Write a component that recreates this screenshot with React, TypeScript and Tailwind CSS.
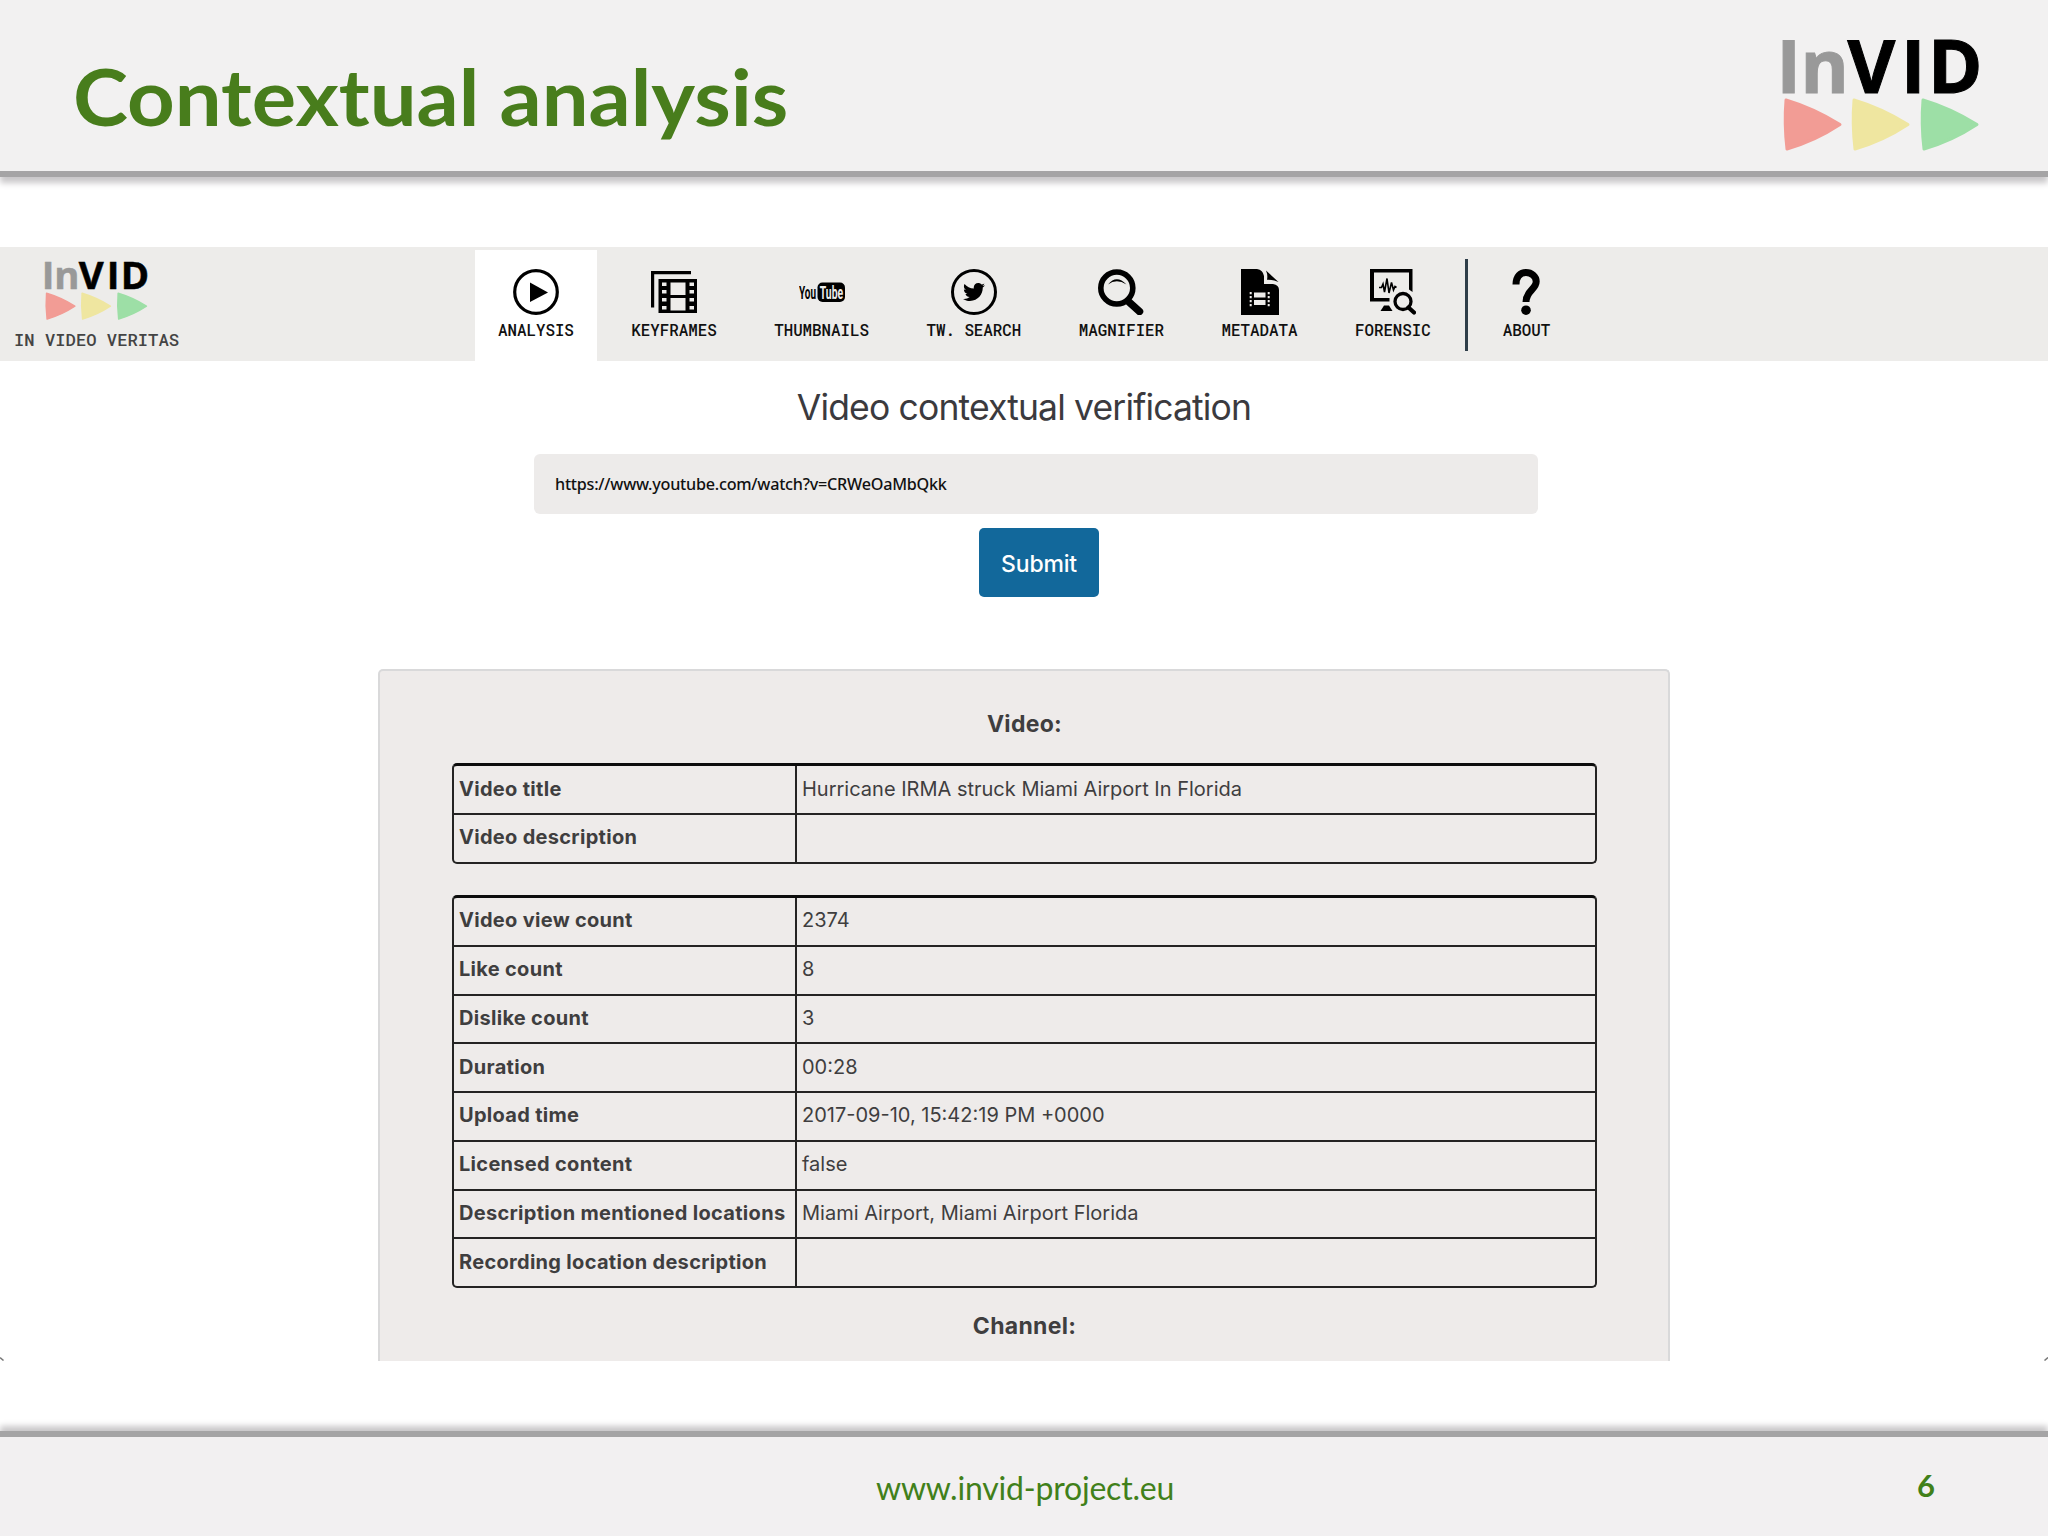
import type { ReactNode } from "react";
import { FaTwitter } from "react-icons/fa";

type Row = { label: string; value: string };

const videoInfo: Row[] = [
  { label: "Video title", value: "Hurricane IRMA struck Miami Airport In Florida" },
  { label: "Video description", value: "" },
];

const videoStats: Row[] = [
  { label: "Video view count", value: "2374" },
  { label: "Like count", value: "8" },
  { label: "Dislike count", value: "3" },
  { label: "Duration", value: "00:28" },
  { label: "Upload time", value: "2017-09-10, 15:42:19 PM +0000" },
  { label: "Licensed content", value: "false" },
  { label: "Description mentioned locations", value: "Miami Airport, Miami Airport Florida" },
  { label: "Recording location description", value: "" },
];

function Logo({ className }: { className?: string }) {
  return (
    <svg viewBox="0 0 197 111" overflow="visible" className={className} aria-label="InVID">
      <g fontFamily="'Open Sans', sans-serif" fontWeight="700" fontSize="73.5">
        <text fill="#999999" stroke="#999999" strokeWidth="1">
          <tspan x="-6.5" y="52.5">I</tspan>
          <tspan x="17.5" y="52.5">n</tspan>
        </text>
        <text fill="#000000" stroke="#000000" strokeWidth="1">
          <tspan x="64.5" y="52.5">V</tspan>
          <tspan x="118" y="52.5">I</tspan>
          <tspan x="145" y="52.5">D</tspan>
        </text>
      </g>
      <g strokeWidth="3" strokeLinejoin="round">
        <path d="M3 60 Q30 68 57 84.500 Q32 101 4 109 Q1 84 3 60Z" fill="#f29c95" stroke="#f29c95" />
        <path d="M71 60 Q98 68 125 84.500 Q100 101 72 109 Q69 84 71 60Z" fill="#efe6a0" stroke="#efe6a0" />
        <path d="M140 60 Q167 68 194 84.500 Q169 101 141 109 Q138 84 140 60Z" fill="#9ddfa6" stroke="#9ddfa6" />
      </g>
    </svg>
  );
}

function PlayIcon() {
  return (
    <svg viewBox="0 0 46 46" className="size-[46px]">
      <circle cx="23" cy="23" r="21.300" fill="none" stroke="#000" strokeWidth="3.2" />
      <path d="M17 13.500 35 23.500 17 33Z" />
    </svg>
  );
}

function KeyframesIcon() {
  return (
    <svg viewBox="0 0 46 46" className="size-[46px]">
      <path d="M0 2h40v3.200H3.200V38.500H0Z" />
      <path
        fillRule="evenodd"
        d="M7.500 10H46V44H7.500ZM19.500 13.500V26H34.500V13.500ZM19.500 29V41.500H34.500V29ZM11 13.500V17H15.500V13.500ZM11 21V24.500H15.500V21ZM11 29V32.500H15.500V29ZM11 37V40.500H15.500V37ZM38.500 13.500V17H43V13.500ZM38.500 21V24.500H43V21ZM38.500 29V32.500H43V29ZM38.500 37V40.500H43V37Z"
      />
    </svg>
  );
}

function YouTubeIcon() {
  return (
    <svg viewBox="0 0 46 46" className="size-[46px]">
      <rect x="18.500" y="13.500" width="27.500" height="19.500" rx="5" />
      <g fontFamily="Roboto, sans-serif" fontWeight="700" fontSize="18.500">
        <text transform="translate(0 29.800) scale(0.54 1)">You</text>
        <text transform="translate(20.800 29.800) scale(0.56 1)" fill="#edecea">Tube</text>
      </g>
    </svg>
  );
}

function TwitterIcon() {
  return (
    <div className="flex size-[46px] items-center justify-center rounded-full border-[3px] border-black">
      <FaTwitter className="size-[22px]" />
    </div>
  );
}

function MagnifierIcon() {
  return (
    <svg viewBox="0 0 46 46" className="size-[46px]">
      <circle cx="18.800" cy="19" r="16" fill="none" stroke="#000" strokeWidth="5.600" />
      <path d="M31 33 41.500 42.500" stroke="#000" strokeWidth="7.500" strokeLinecap="round" />
      <path d="M10 15.500Q18.500 5 28.500 15.500Q18.500 9 10 15.500Z" />
    </svg>
  );
}

function MetadataIcon() {
  return (
    <svg viewBox="0 0 46 46" className="size-[46px]">
      <path d="M4 0H20Q26 1 27 7V15H36Q42 16 42 21V46H4Z" />
      <path d="M29 1.500 41.500 13Q36 10.500 30 10.800Q31 6 29 1.500Z" />
      <g fill="#edecea">
        <path d="M17 23.500H28.500V28.500H17ZM17 31H28.500V36H17Z" />
        <path d="M12.700 23h2v2.200h-2zM12.700 27h2v2.200h-2zM12.700 31h2v2.200h-2zM12.700 35h2v2.200h-2zM30.700 23h2v2.200h-2zM30.700 27h2v2.200h-2zM30.700 31h2v2.200h-2zM30.700 35h2v2.200h-2z" />
      </g>
    </svg>
  );
}

function ForensicIcon() {
  return (
    <svg viewBox="0 0 46 46" className="size-[46px]">
      <path d="M0 0H42.500V23L39 20.500V3.500H4V29H19.500V32.500H0Z" />
      <path d="M14 36.500H19L22.500 42H10.500Z" />
      <path
        d="M9 18.500H11.500L13 15 14.500 23 17 9.500 19 24 21.500 13.500 23.500 21 25 17.500 26.500 18.500"
        fill="none"
        stroke="#000"
        strokeWidth="1.600"
      />
      <circle cx="33" cy="32.500" r="8" fill="none" stroke="#000" strokeWidth="3.300" />
      <path d="M38.500 38.500 44 43.500" stroke="#000" strokeWidth="4.200" strokeLinecap="round" />
    </svg>
  );
}

function AboutIcon() {
  return (
    <svg viewBox="0 0 46 46" className="size-[46px]">
      <path
        d="M13 15.500C13 7 17.500 3.500 23 3.500S33.200 7.500 33.200 12.500C33.200 20.500 23 21.500 23 33"
        fill="none"
        stroke="#000"
        strokeWidth="7"
      />
      <circle cx="23" cy="41.200" r="4.800" />
    </svg>
  );
}

function NavItem({ label, active, children }: { label: string; active?: boolean; children: ReactNode }) {
  return (
    <a
      className={
        active
          ? "flex h-[111px] flex-col items-center bg-white px-[23px] pt-[19px]"
          : "flex h-[111px] flex-col items-center px-[23px] pt-[19px]"
      }
    >
      {children}
      <span className="mt-[4px] font-['Roboto_Mono',monospace] text-[15.8px] leading-[22px] font-medium whitespace-pre text-[#111]">
        {label}
      </span>
    </a>
  );
}

function InfoTable({ rows }: { rows: Row[] }) {
  return (
    <div className="overflow-hidden rounded-[5px] border-2 border-t-[3px] border-[#242323] border-t-[#0c0c0c]">
      {rows.map((row, i) => (
        <div key={row.label} className={i === 0 ? "flex h-[47px]" : "flex h-[48.75px] border-t-2 border-[#242323]"}>
          <div className="flex w-[343px] shrink-0 items-center border-r-2 border-[#242323] pb-[2px] pl-[5px] font-bold tracking-[0.3px] whitespace-nowrap">
            {row.label}
          </div>
          <div className="flex items-center pb-[2px] pl-[5px]">{row.value}</div>
        </div>
      ))}
    </div>
  );
}

export default function App() {
  return (
    <div className="flex h-[1536px] w-[2048px] flex-col overflow-hidden bg-white">
      <header className="flex h-[177px] shrink-0 justify-between border-b-[6px] border-[#a5a4a5] bg-[#f2f1f1] shadow-[0_6px_6px_#c9c7c9]">
        <h1 className="mt-[46px] ml-[73px] origin-left scale-x-[1.065] font-[Lato,sans-serif] text-[78px] leading-[100px] font-bold whitespace-nowrap text-[#487d1c]">
          Contextual analysis
        </h1>
        <Logo className="mt-[40px] mr-[68px] h-[111px] w-[197px]" />
      </header>

      <main className="relative flex h-[1184px] shrink-0 flex-col pt-[70px] font-[Inter,sans-serif]">
        <nav className="flex h-[114px] shrink-0 bg-[#edecea]">
          <div className="w-[475px] pt-[15px] pl-[14px]">
            <Logo className="ml-[31px] h-[58px] w-[103px]" />
            <p className="mt-[8px] font-['Roboto_Mono',monospace] text-[17.2px] leading-[24px] font-medium text-[#444]">
              IN VIDEO VERITAS
            </p>
          </div>
          <div className="flex gap-[11.5px] pt-[3px]">
            <NavItem label="ANALYSIS" active><PlayIcon /></NavItem>
            <NavItem label="KEYFRAMES"><KeyframesIcon /></NavItem>
            <NavItem label="THUMBNAILS"><YouTubeIcon /></NavItem>
            <NavItem label="TW. SEARCH"><TwitterIcon /></NavItem>
            <NavItem label="MAGNIFIER"><MagnifierIcon /></NavItem>
            <NavItem label="METADATA"><MetadataIcon /></NavItem>
            <NavItem label="FORENSIC"><ForensicIcon /></NavItem>
            <div className="mt-[9px] h-[92px] w-[3px] bg-[#2f3e49]" />
            <NavItem label="ABOUT"><AboutIcon /></NavItem>
          </div>
        </nav>

        <h2 className="mt-[23px] text-center text-[35.5px] leading-[48px] tracking-[-0.85px] text-[#3b3a3e]">
          Video contextual verification
        </h2>
        <div className="mt-[22px] ml-[534px] flex h-[60px] w-[1004px] items-center rounded-md bg-[#edebea] pl-[21px] font-['Noto_Sans',sans-serif] text-[16.2px] font-medium tracking-[-0.25px] text-[#111]">
          https://www.youtube.com/watch?v=CRWeOaMbQkk
        </div>
        <button className="mt-[14px] ml-[979px] h-[69px] w-[120px] rounded-[5px] bg-[#12689b] pt-[3px] text-[23px] font-medium tracking-[-0.2px] text-white">
          Submit
        </button>

        <section className="mt-[72px] ml-[378px] h-[692px] w-[1292px] shrink-0 rounded-t-[5px] border-2 border-b-0 border-[#d9d9da] bg-[#eeebea] pr-[71px] pl-[72px] text-[20px] text-[#3f3e3f]">
          <h3 className="pt-[37px] text-center text-[23px] leading-[32px] font-bold tracking-[0.3px]">Video:</h3>
          <div className="mt-[23px]">
            <InfoTable rows={videoInfo} />
          </div>
          <div className="mt-[31px]">
            <InfoTable rows={videoStats} />
          </div>
          <h3 className="mt-[22px] text-center text-[23px] leading-[32px] font-bold tracking-[0.3px]">Channel:</h3>
        </section>

        <svg viewBox="0 0 4 4" className="absolute bottom-0 left-0 size-1">
          <path d="M0 0.500 3.500 3.500" stroke="#777" strokeWidth="1.500" />
        </svg>
        <svg viewBox="0 0 4 4" className="absolute right-0 bottom-0 size-1">
          <path d="M4 0.500 0.500 3.500" stroke="#777" strokeWidth="1.500" />
        </svg>
      </main>

      <footer className="mt-[70px] flex h-[105px] shrink-0 justify-between border-t-[6px] border-[#a5a4a5] bg-[#f2f0f1] font-[Lato,sans-serif] text-[#41801a] shadow-[0_-5px_6px_#c9c7c9]">
        <p className="mt-[31px] ml-[876px] text-[32px] leading-[40px] tracking-[-0.2px]">www.invid-project.eu</p>
        <p className="mt-[28px] mr-[113px] text-[31px] leading-[40px] font-bold">6</p>
      </footer>
    </div>
  );
}
